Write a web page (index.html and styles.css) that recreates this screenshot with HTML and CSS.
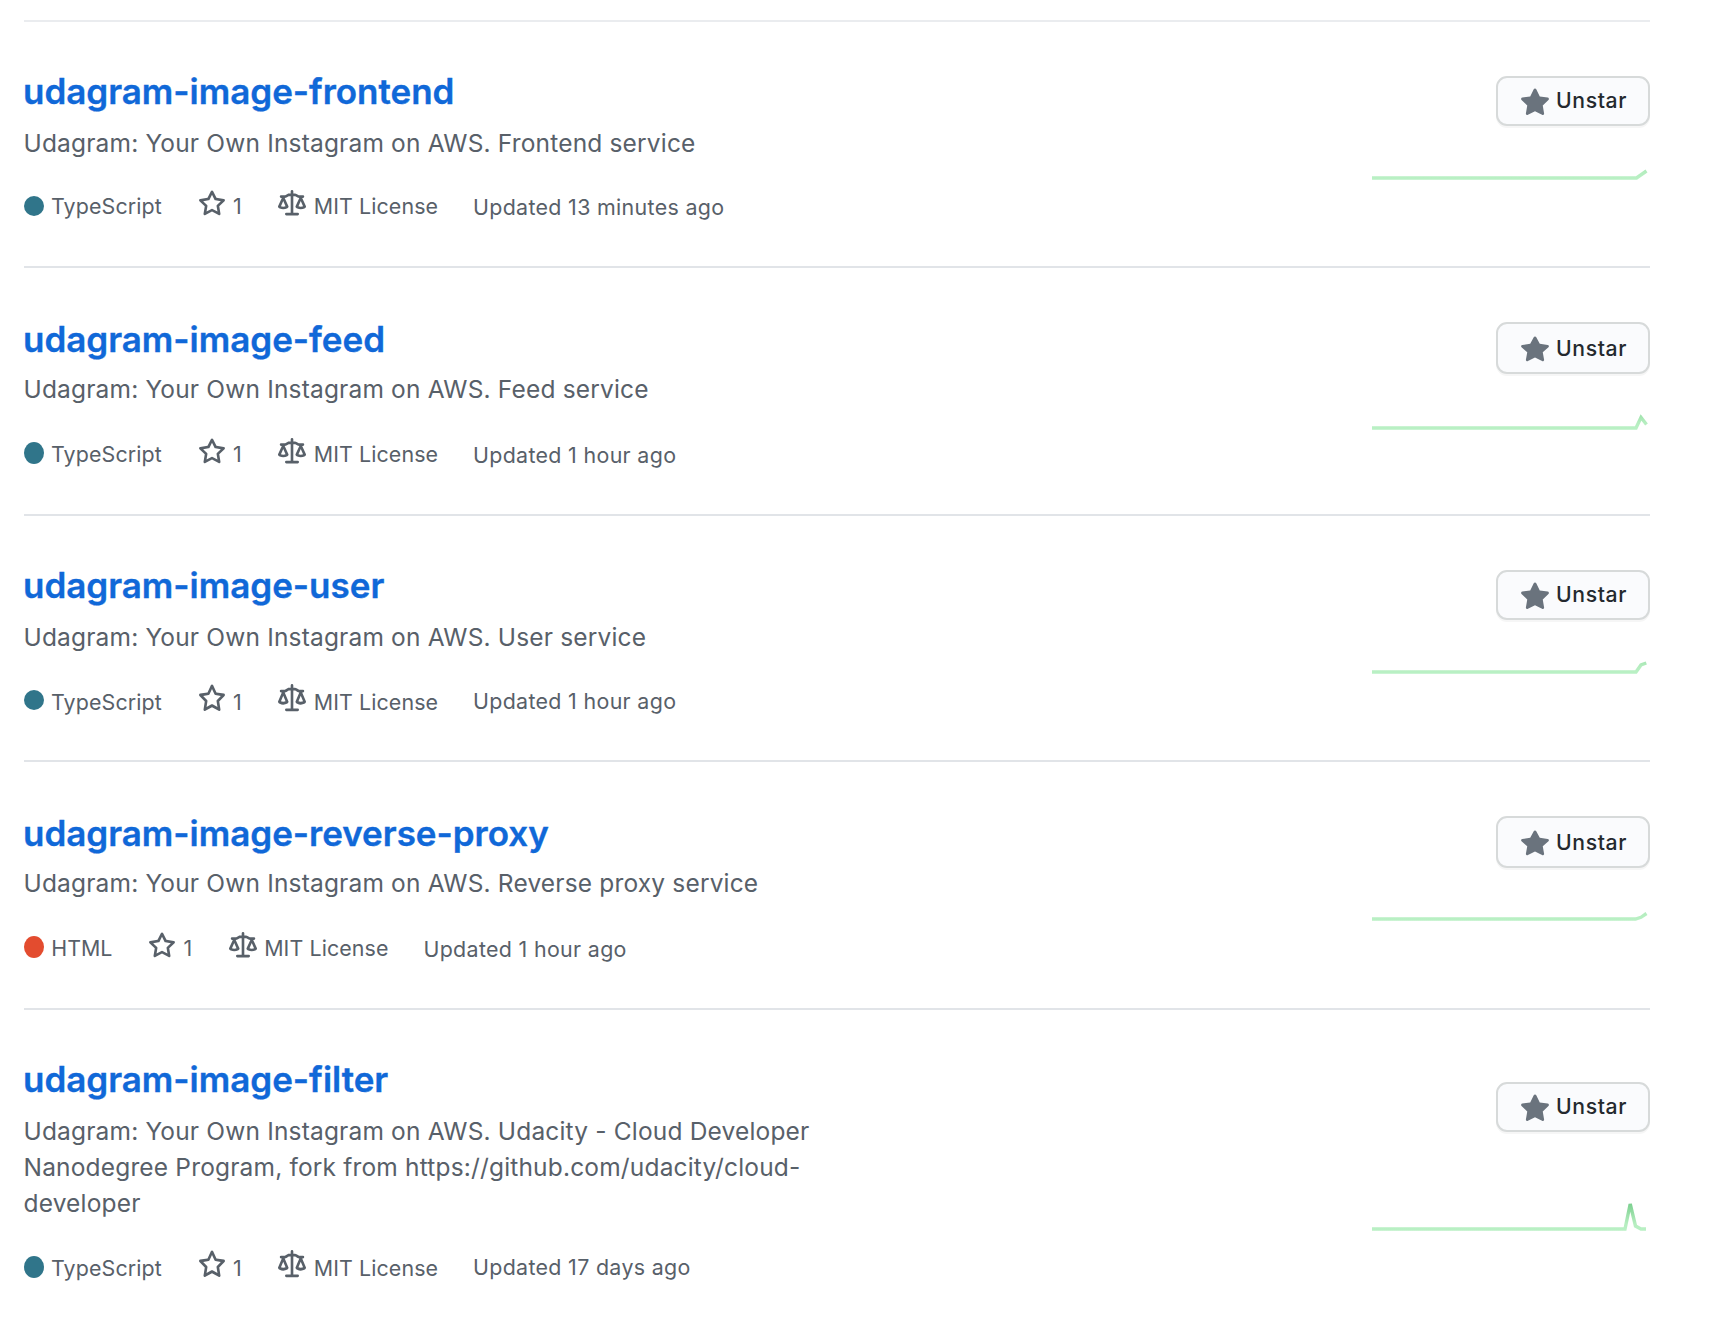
FILE: index.html
```html
<!DOCTYPE html>
<html lang="en">
<head>
<meta charset="utf-8">
<title>Repositories</title>
<link rel="stylesheet" href="styles.css">
</head>
<body>
<svg class="defs" aria-hidden="true">
  <defs>
    <linearGradient id="activity" gradientUnits="userSpaceOnUse" x1="0" y1="34" x2="0" y2="6">
      <stop offset="0" stop-color="#b9f0c4"/>
      <stop offset="0.2" stop-color="#b5edbf"/>
      <stop offset="1" stop-color="#74cc89"/>
    </linearGradient>
    <symbol id="star" viewBox="0 0 16 16" preserveAspectRatio="none">
      <path fill-rule="evenodd" d="M8 .25a.75.75 0 01.673.418l1.882 3.815 4.21.612a.75.75 0 01.416 1.279l-3.046 2.97.719 4.192a.75.75 0 01-1.088.791L8 12.347l-3.766 1.98a.75.75 0 01-1.088-.79l.72-4.194L.818 6.374a.75.75 0 01.416-1.28l4.21-.611L7.327.668A.75.75 0 018 .25zm0 2.445L6.615 5.5a.75.75 0 01-.564.41l-3.097.45 2.24 2.184a.75.75 0 01.216.664l-.528 3.084 2.769-1.456a.75.75 0 01.698 0l2.77 1.456-.53-3.084a.75.75 0 01.216-.664l2.24-2.183-3.096-.45a.75.75 0 01-.564-.41L8 2.694v.001z"/>
    </symbol>
    <symbol id="star-fill" viewBox="0 0 16 16" preserveAspectRatio="none">
      <path fill-rule="evenodd" d="M8 .25a.75.75 0 01.673.418l1.882 3.815 4.21.612a.75.75 0 01.416 1.279l-3.046 2.97.719 4.192a.75.75 0 01-1.088.791L8 12.347l-3.766 1.98a.75.75 0 01-1.088-.79l.72-4.194L.818 6.374a.75.75 0 01.416-1.28l4.21-.611L7.327.668A.75.75 0 018 .25z"/>
    </symbol>
    <symbol id="law" viewBox="0 0 16 16" preserveAspectRatio="none">
      <path fill-rule="evenodd" d="M8.75.75a.75.75 0 00-1.5 0V2h-.984c-.305 0-.604.08-.869.23l-1.288.737A.25.25 0 013.984 3H1.75a.75.75 0 000 1.5h.428L.066 9.192a.75.75 0 00.154.838l.53-.53-.53.53v.001l.002.002.002.002.006.006.016.015.045.04a3.514 3.514 0 00.686.45A4.492 4.492 0 003 11c.88 0 1.556-.22 2.023-.454a3.515 3.515 0 00.686-.45l.045-.04.016-.015.006-.006.002-.002.001-.002L5.25 9.5l.53.53a.75.75 0 00.154-.838L3.822 4.5h.162c.305 0 .604-.08.869-.23l1.289-.737a.25.25 0 01.124-.033h.984V13h-2.5a.75.75 0 000 1.5h6.5a.75.75 0 000-1.5h-2.5V3.5h.984a.25.25 0 01.124.033l1.29.736c.264.152.563.231.868.231h.162l-2.112 4.692a.75.75 0 00.154.838l.53-.53-.53.53v.001l.002.002.002.002.006.006.016.015.045.04a3.517 3.517 0 00.686.45A4.492 4.492 0 0013 11c.88 0 1.556-.22 2.023-.454a3.512 3.512 0 00.686-.45l.045-.04.01-.01.006-.005.006-.006.002-.002.001-.002-.529-.531.53.53a.75.75 0 00.154-.838L13.823 4.5h.427a.75.75 0 000-1.5h-2.234a.25.25 0 01-.124-.033l-1.29-.736A1.75 1.75 0 009.735 2H8.75V.75zM1.695 9.227c.285.135.718.273 1.305.273s1.02-.138 1.305-.273L3 6.327l-1.305 2.9zm10 0c.285.135.718.273 1.305.273s1.02-.138 1.305-.273L13 6.327l-1.305 2.9z"/>
    </symbol>
  </defs>
</svg>

<ul class="repos">
  <li class="repo repo--frontend">
    <div class="repo__info">
      <h3 class="repo__name"><a href="#">udagram-image-frontend</a></h3>
      <p class="repo__desc">Udagram: Your Own Instagram on AWS. Frontend service</p>
      <div class="meta">
        <span class="meta__item"><span class="dot"></span><span class="meta__text meta__text--lang">TypeScript</span></span>
        <a class="meta__item" href="#"><svg class="icon"><use href="#star"/></svg><span class="meta__text meta__text--count">1</span></a>
        <span class="meta__item"><svg class="icon"><use href="#law"/></svg><span class="meta__text meta__text--license">MIT License</span></span>
        <span class="meta__updated">Updated 13 minutes ago</span>
      </div>
    </div>
    <div class="repo__side">
      <button class="btn"><svg class="btn__star"><use href="#star-fill"/></svg><span class="btn__label">Unstar</span></button>
      <svg class="spark" viewBox="0 0 278 36"><polyline points="0,34 264.5,34 274.5,27"/></svg>
    </div>
  </li>
  <li class="repo repo--feed">
    <div class="repo__info">
      <h3 class="repo__name"><a href="#">udagram-image-feed</a></h3>
      <p class="repo__desc">Udagram: Your Own Instagram on AWS. Feed service</p>
      <div class="meta">
        <span class="meta__item"><span class="dot"></span><span class="meta__text meta__text--lang">TypeScript</span></span>
        <a class="meta__item" href="#"><svg class="icon"><use href="#star"/></svg><span class="meta__text meta__text--count">1</span></a>
        <span class="meta__item"><svg class="icon"><use href="#law"/></svg><span class="meta__text meta__text--license">MIT License</span></span>
        <span class="meta__updated">Updated 1 hour ago</span>
      </div>
    </div>
    <div class="repo__side">
      <button class="btn"><svg class="btn__star"><use href="#star-fill"/></svg><span class="btn__label">Unstar</span></button>
      <svg class="spark" viewBox="0 0 278 36"><polyline points="0,34 264,34 269,23.5 274.5,30.5"/></svg>
    </div>
  </li>
  <li class="repo repo--user">
    <div class="repo__info">
      <h3 class="repo__name"><a href="#">udagram-image-user</a></h3>
      <p class="repo__desc">Udagram: Your Own Instagram on AWS. User service</p>
      <div class="meta">
        <span class="meta__item"><span class="dot"></span><span class="meta__text meta__text--lang">TypeScript</span></span>
        <a class="meta__item" href="#"><svg class="icon"><use href="#star"/></svg><span class="meta__text meta__text--count">1</span></a>
        <span class="meta__item"><svg class="icon"><use href="#law"/></svg><span class="meta__text meta__text--license">MIT License</span></span>
        <span class="meta__updated">Updated 1 hour ago</span>
      </div>
    </div>
    <div class="repo__side">
      <button class="btn"><svg class="btn__star"><use href="#star-fill"/></svg><span class="btn__label">Unstar</span></button>
      <svg class="spark" viewBox="0 0 278 36"><polyline points="0,34 264,34 269,27 274.3,25"/></svg>
    </div>
  </li>
  <li class="repo repo--proxy">
    <div class="repo__info">
      <h3 class="repo__name"><a href="#">udagram-image-reverse-proxy</a></h3>
      <p class="repo__desc">Udagram: Your Own Instagram on AWS. Reverse proxy service</p>
      <div class="meta">
        <span class="meta__item"><span class="dot dot--html"></span><span class="meta__text">HTML</span></span>
        <a class="meta__item" href="#"><svg class="icon"><use href="#star"/></svg><span class="meta__text meta__text--count">1</span></a>
        <span class="meta__item"><svg class="icon"><use href="#law"/></svg><span class="meta__text meta__text--license">MIT License</span></span>
        <span class="meta__updated">Updated 1 hour ago</span>
      </div>
    </div>
    <div class="repo__side">
      <button class="btn"><svg class="btn__star"><use href="#star-fill"/></svg><span class="btn__label">Unstar</span></button>
      <svg class="spark" viewBox="0 0 278 36"><polyline points="0,34 263.5,34 269,32.3 274.5,28.5"/></svg>
    </div>
  </li>
  <li class="repo repo--filter">
    <div class="repo__info">
      <h3 class="repo__name"><a href="#">udagram-image-filter</a></h3>
      <p class="repo__desc">Udagram: Your Own Instagram on AWS. Udacity - Cloud Developer Nanodegree Program, fork from https://github.com/udacity/cloud-developer</p>
      <div class="meta">
        <span class="meta__item"><span class="dot"></span><span class="meta__text meta__text--lang">TypeScript</span></span>
        <a class="meta__item" href="#"><svg class="icon"><use href="#star"/></svg><span class="meta__text meta__text--count">1</span></a>
        <span class="meta__item"><svg class="icon"><use href="#law"/></svg><span class="meta__text meta__text--license">MIT License</span></span>
        <span class="meta__updated">Updated 17 days ago</span>
      </div>
    </div>
    <div class="repo__side">
      <button class="btn"><svg class="btn__star"><use href="#star-fill"/></svg><span class="btn__label">Unstar</span></button>
      <svg class="spark" viewBox="0 0 278 36"><polyline points="0,34 253,34 258.2,9 263.5,31 269,34 274,34"/></svg>
    </div>
  </li>
</ul>
</body>
</html>
```

FILE: styles.css
```css
* { box-sizing: border-box; }

body {
  margin: 0;
  padding: 20px 78px 0 24px;
  background: #fff;
  color: #586069;
  font-family: Inter, "Liberation Sans", sans-serif;
}

a { color: inherit; text-decoration: none; }

.defs { position: absolute; width: 0; height: 0; }

.repos { margin: 0; padding: 0; list-style: none; }

/* Each row sets the rhythm of its own contents */
.repo {
  --name-top: 47px;
  --name-gap: 12px;
  --meta-gap: 29px;
  --icon-h: 28px;
  --text-top: 1px;
  --updated-top: 2px;
  --dot-top: 6px;
  --dot-h: 20px;
  --btn-top: 54px;
  --btn-h: 50px;
  --label-top: 7px;
  --star-top: 10px;
  --star-h: 30px;
  --spark-gap: 18.3px;
  display: flex;
  justify-content: space-between;
  height: 246px;
  border-top: 2px solid #e1e4e8;
}

.repo--frontend { border-top-color: #eaecef; }

.repo--feed,
.repo--proxy {
  --name-top: 49px;
  --name-gap: 10px;
  --meta-gap: 31px;
  --text-top: 1px;
  --btn-h: 52px;
  --label-top: 9px;
  --star-top: 12px;
  --star-h: 28px;
  --dot-top: 4px;
  --dot-h: 22px;
  height: 248px;
}

.repo--feed { --spark-gap: 20px; }
.repo--proxy { --spark-gap: 16.7px; }

.repo--user {
  --meta-gap: 29px;
  --icon-h: 30px;
  --text-top: 3px;
  --updated-top: 2px;
}

.repo--filter {
  --meta-gap: 29px;
  --icon-h: 30px;
  --text-top: 3px;
  --updated-top: 2px;
  --dot-h: 22px;
  --btn-top: 72px;
  --spark-gap: 63.3px;
  height: 318px;
}

.repo__info { width: 800px; padding-top: var(--name-top); }

.repo__name {
  margin: 0 0 var(--name-gap) -1px;
  color: #1068d8;
  font-size: 35px;
  font-weight: 600;
  line-height: 44px;
  letter-spacing: -0.02px;
  -webkit-text-stroke: 0.35px #1068d8;
}

.repo__desc {
  margin: 0 0 var(--meta-gap) -0.5px;
  font-size: 24.5px;
  line-height: 36px;
  letter-spacing: 0.17px;
}

.meta {
  display: flex;
  align-items: flex-start;
  gap: 35.7px;
  font-size: 21.4px;
  line-height: 30px;
}

.meta__item { display: flex; align-items: flex-start; }

.meta__text { margin: var(--text-top) 0 0 7.3px; }
.meta__text--lang { margin-left: 7px; letter-spacing: 0.13px; }
.meta__text--count { padding-right: 0.8px; }
.meta__text--license { margin-left: 7.6px; letter-spacing: 0.1px; }

.meta__updated { margin: var(--updated-top) 0 0 -0.8px; letter-spacing: 0.33px; }

.dot {
  width: 20px;
  height: var(--dot-h);
  margin-top: var(--dot-top);
  border-radius: 50%;
  background: #30758a;
}

.dot--html { background: #e34c2f; }

.icon { width: 28px; height: var(--icon-h); fill: #586069; }

.repo__side {
  display: flex;
  flex-direction: column;
  align-items: flex-end;
  padding-top: var(--btn-top);
}

.btn {
  display: flex;
  align-items: flex-start;
  width: 154px;
  height: var(--btn-h);
  padding: 0 0 0 22px;
  border: 2px solid #d7dada;
  border-radius: 11px;
  background: #fafbfd;
  box-shadow: 0 2px 0 rgba(27, 31, 35, 0.04);
  color: #24292e;
  font: 500 21.2px/30px Inter, "Liberation Sans", sans-serif;
  letter-spacing: 0.6px;
}

.btn__star {
  width: 30px;
  height: var(--star-h);
  margin-top: var(--star-top);
  fill: #6a737d;
}

.btn__label { margin: var(--label-top) 0 0 6px; }

.spark {
  width: 278px;
  height: 36px;
  margin-top: var(--spark-gap);
  fill: none;
  stroke: url(#activity);
  stroke-width: 3.4;
}
```
